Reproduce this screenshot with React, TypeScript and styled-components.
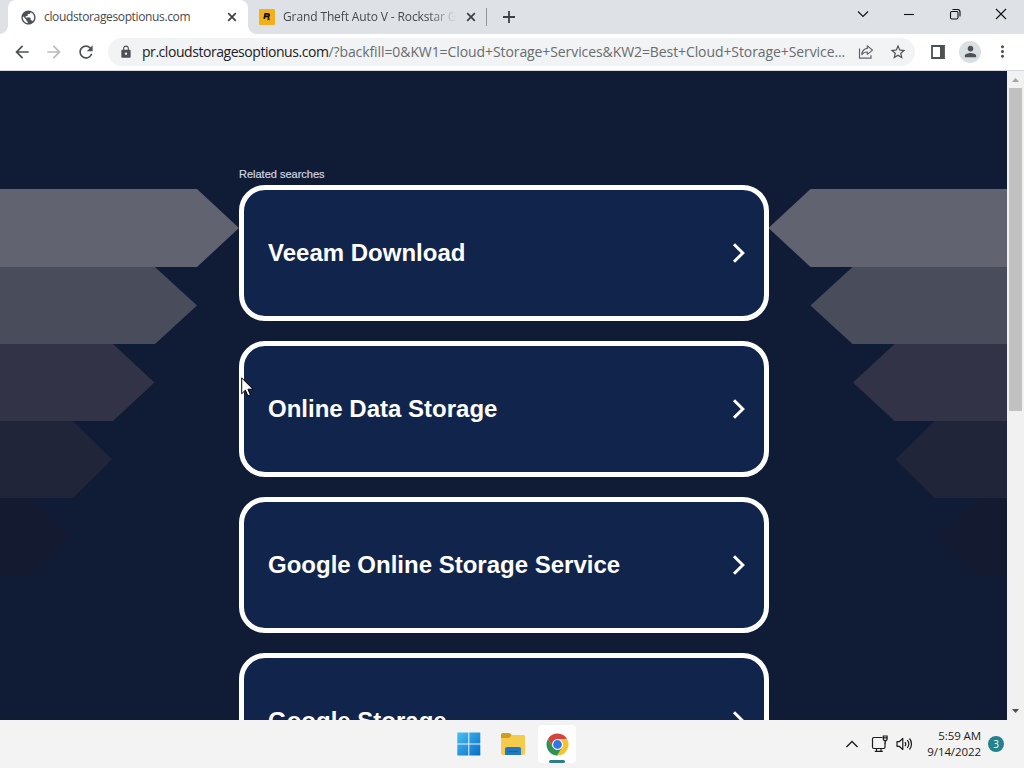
import React from "react";
import styled, { createGlobalStyle } from "styled-components";
import {
    MdArrowBack,
    MdArrowForward,
    MdLock,
    MdMoreVert,
    MdPerson,
    MdPublic,
    MdRefresh,
    MdStarBorder,
} from "react-icons/md";

const searches = [
    "Veeam Download",
    "Online Data Storage",
    "Google Online Storage Service",
    "Google Storage",
];

const arrows = [
    { top: 0, bottom: 78, neck: 197, tip: 239, fill: "#626371" },
    { top: 78, bottom: 155, neck: 155, tip: 197, fill: "#494c5b" },
    { top: 155, bottom: 232, neck: 113, tip: 154.5, fill: "#323347" },
    { top: 232, bottom: 309, neck: 73, tip: 112, fill: "#212539" },
    { top: 309, bottom: 386, neck: 29, tip: 69, fill: "#141a30" },
];

const CloseIcon = () => (
    <svg width="10" height="10" viewBox="0 0 10 10">
        <path d="M1.2 1.2l7.6 7.6M8.8 1.2L1.2 8.8" stroke="#3c4043" strokeWidth="1.7" />
    </svg>
);

const RockstarIcon = () => (
    <svg width="16" height="16" viewBox="0 0 16 16">
        <rect width="16" height="16" rx="1" fill="#f2b01c" />
        <path
            d="M5.2 9.800l1-5h2.600c2 0 1.900 2.200.3 2.600.7.4.3 1 .4 1.600M6.200 7.400h2.400"
            fill="none"
            stroke="#15120a"
            strokeWidth="1.7"
        />
        <path d="M9 8.500l.8 1 1.500-.1-.9.9.4 1.100-1.300-.6-1.200.6.300-1.200z" fill="#15120a" />
    </svg>
);

const ShareIcon = () => (
    <svg width="16" height="16" viewBox="0 0 16 16">
        <path
            d="M1.500 4.500v9.700h11.500v-3M9.300 1.800l5.200 4.300-5.200 4.300V8c-2.600 0-4.200.8-5.500 2.600.3-3.400 2.200-5.800 5.500-6.200z"
            fill="none"
            stroke="#5f6368"
            strokeWidth="1.2"
            strokeLinejoin="round"
        />
    </svg>
);

const ChromeIcon = () => (
    <svg width="23" height="23" viewBox="0 0 48 48">
        <circle cx="24" cy="24" r="23" fill="#fff" />
        <path d="M24 13h20.200A23 23 0 0 0 4.100 12.500l10.300 17A11 11 0 0 1 24 13z" fill="#d5453b" />
        <path d="M33.500 29.500L23.400 47A23 23 0 0 0 44.200 13H24a11 11 0 0 1 9.500 16.500z" fill="#f3c332" />
        <path d="M14.500 29.500L4.100 12.500A23 23 0 0 0 23.400 47l10.100-17.500a11 11 0 0 1-19 0z" fill="#2f9152" />
        <circle cx="24" cy="24" r="11" fill="#fff" />
        <circle cx="24" cy="24" r="9.200" fill="#2f78e4" />
    </svg>
);

const FolderIcon = () => (
    <svg width="24" height="22" viewBox="0 0 24 22">
        <path d="M0 2a2 2 0 0 1 2-2h6.500L11 2.500V6H0z" fill="#cf9c1b" />
        <path d="M0 5h8l3-3h11.500A1.500 1.500 0 0 1 24 3.500V20a2 2 0 0 1-2 2H2a2 2 0 0 1-2-2z" fill="#f5cb4d" />
        <path d="M4 22v-6a2 2 0 0 1 2-2h12a2 2 0 0 1 2 2v6z" fill="#1f78c2" />
        <path d="M7 18.500h10" stroke="#17629f" strokeWidth="1.200" />
    </svg>
);

const WindowsIcon = () => (
    <svg width="24" height="24" viewBox="0 0 24 24">
        <defs>
            <linearGradient id="win" x1="0" y1="0" x2="24" y2="24" gradientUnits="userSpaceOnUse">
                <stop offset="0" stopColor="#46c4f3" />
                <stop offset="1" stopColor="#0569c7" />
            </linearGradient>
        </defs>
        <path d="M.3.500h11v11H.3zM12.300.500h11v11h-11zM.3 12.500h11v11H.3zM12.300 12.500h11v11h-11z" fill="url(#win)" />
    </svg>
);

const NetworkIcon = () => (
    <svg width="18" height="18" viewBox="0 0 18 18" fill="none" stroke="#1b1b1b" strokeWidth="1.200">
        <path d="M11.500 2.500H3a1.500 1.500 0 0 0-1.500 1.500v8A1.500 1.500 0 0 0 3 13.500h9.500a1.500 1.500 0 0 0 1.500-1.500V7.500M5.500 13.500V16M10 13.500V16M3.800 16.400h8" />
        <path d="M12.300 1h3.800v3.200l-.9 1.400h-2l-.9-1.400zM12.300 2.800h3.800M14.200 5.600v3" />
    </svg>
);

const VolumeIcon = () => (
    <svg width="18" height="16" viewBox="0 0 18 16" fill="none" stroke="#1b1b1b" strokeWidth="1.200">
        <path d="M1 5.700h2.200L6.800 2.500v11L3.200 10.300H1z" strokeLinejoin="round" />
        <path d="M9 6a3.200 3.200 0 0 1 0 4M11.300 4.200a6 6 0 0 1 0 7.600M13.500 2.500a8.600 8.600 0 0 1 0 11" />
    </svg>
);

const Arrows = ({ width, mirrored = false }) => (
    <ArrowArt width={width} height="386" viewBox={`0 0 ${width} 386`}>
        <g transform={mirrored ? "translate(238.500 0) scale(-1 1)" : undefined}>
            {arrows.map(({ top, bottom, neck, tip, fill }) => (
                <polygon
                    key={top}
                    fill={fill}
                    points={`-10,${top} ${neck},${top} ${tip},${(top + bottom) / 2} ${neck},${bottom} -10,${bottom}`}
                />
            ))}
        </g>
    </ArrowArt>
);

const App = () => (
    <Screen>
        <GlobalStyle />
        <TabStrip>
            <Tab active>
                <MdPublic size={17} color="#4d5156" />
                <TabTitle spacing={-0.36}>cloudstoragesoptionus.com</TabTitle>
                <CloseIcon />
            </Tab>
            <Tab>
                <RockstarIcon />
                <TabTitle faded spacing={-0.12}>
                    Grand Theft Auto V - Rockstar Ga
                </TabTitle>
                <CloseIcon />
            </Tab>
            <NewTab>
                <svg width="12" height="12" viewBox="0 0 12 12">
                    <path d="M6 0v12M0 6h12" stroke="#3c4043" strokeWidth="1.800" />
                </svg>
            </NewTab>
            <WindowButtons>
                <svg width="12" height="12" viewBox="0 0 12 12">
                    <path d="M1 3.500l5 5 5-5" />
                </svg>
                <svg width="12" height="12" viewBox="0 0 12 12">
                    <path d="M1 6.500h10" />
                </svg>
                <svg width="12" height="12" viewBox="0 0 12 12">
                    <rect x="1.500" y="3.500" width="7.500" height="7.500" rx="1.500" />
                    <path d="M3.500 1.500H8.500a2.500 2.500 0 0 1 2.500 2.500v4.500" />
                </svg>
                <svg width="12" height="12" viewBox="0 0 12 12">
                    <path d="M1 1l10 10M11 1L1 11" />
                </svg>
            </WindowButtons>
        </TabStrip>
        <Toolbar>
            <NavButtons>
                <MdArrowBack size={20} />
                <MdArrowForward size={20} color="#b9bbbe" />
                <MdRefresh size={20} />
            </NavButtons>
            <AddressBar>
                <MdLock size={14} />
                <Url>
                    <b>pr.cloudstoragesoptionus.com</b>
                    /?backfill=0&amp;KW1=Cloud+Storage+Services&amp;KW2=Best+Cloud+Storage+Service...
                </Url>
                <ShareIcon />
                <MdStarBorder size={18} />
            </AddressBar>
            <ToolbarActions>
                <svg width="14" height="14" viewBox="0 0 14 14">
                    <path d="M1 1h12v12H1z" fill="none" stroke="#4d5156" strokeWidth="1.800" />
                    <path d="M9 1h4v12H9z" fill="#4d5156" />
                </svg>
                <Avatar>
                    <MdPerson size={17} />
                </Avatar>
                <MdMoreVert size={19} />
            </ToolbarActions>
        </Toolbar>
        <Viewport>
            <Page>
                <Arrows width={239} />
                <Results>
                    <Caption>Related searches</Caption>
                    {searches.map(search => (
                        <Card key={search}>
                            {search}
                            <svg width="14" height="22" viewBox="0 0 14 22">
                                <path d="M2 2.200l8.800 8.800L2 19.800" fill="none" stroke="#fff" strokeWidth="3" />
                            </svg>
                        </Card>
                    ))}
                </Results>
                <Arrows width={238} mirrored />
            </Page>
            <Scrollbar>
                <svg width="7" height="4" viewBox="0 0 7 4">
                    <path d="M0 4l3.500-4L7 4z" fill="#a3a3a3" />
                </svg>
                <Thumb />
                <svg width="7" height="4" viewBox="0 0 7 4">
                    <path d="M0 0l3.500 4L7 0z" fill="#505050" />
                </svg>
            </Scrollbar>
            <Cursor width="13" height="20" viewBox="0 0 13 20">
                <path
                    d="M.7.900v15.800l3.700-3.500 2.500 5.700 2.500-1.100-2.500-5.600h5.100z"
                    fill="#fff"
                    stroke="#000"
                />
            </Cursor>
        </Viewport>
        <Taskbar>
            <Apps>
                <AppButton>
                    <WindowsIcon />
                </AppButton>
                <AppButton>
                    <FolderIcon />
                </AppButton>
                <AppButton active>
                    <ChromeIcon />
                </AppButton>
            </Apps>
            <Tray>
                <svg width="12" height="12" viewBox="0 0 12 12">
                    <path d="M.5 9L6 3.500 11.500 9" fill="none" stroke="#1b1b1b" strokeWidth="1.300" />
                </svg>
                <NetworkIcon />
                <VolumeIcon />
                <Clock>
                    <span>5:59 AM</span>
                    <span>9/14/2022</span>
                </Clock>
                <Badge>3</Badge>
            </Tray>
        </Taskbar>
    </Screen>
);

const GlobalStyle = createGlobalStyle`
    * {
        box-sizing: border-box;
    }

    body {
        margin: 0;
        overflow: hidden;
    }

    svg {
        display: block;
        flex-shrink: 0;
    }
`;

const Screen = styled.div`
    display: flex;
    flex-direction: column;
    width: 1024px;
    height: 768px;
    overflow: hidden;
    font-family: "Open Sans", "Noto Sans", sans-serif;
`;

const TabStrip = styled.div`
    display: flex;
    height: 34px;
    background-color: #dee1e6;
`;

const Tab = styled.div<{ active?: boolean }>`
    display: flex;
    align-items: center;
    width: ${props => (props.active ? "240px" : "238px")};
    margin-left: ${props => (props.active ? "8px" : "0")};
    padding: 0 ${props => (props.active ? "11px 0 12px" : "10px 0 11px")};
    border-radius: 8px 8px 0 0;
    background-color: ${props => (props.active ? "#fff" : "transparent")};
    position: relative;

    /* flared feet of the selected tab */
    &::before,
    &::after {
        content: ${props => (props.active ? '""' : "none")};
        position: absolute;
        bottom: 0;
        width: 8px;
        height: 8px;
    }

    &::before {
        left: -8px;
        background: radial-gradient(circle at 0 0, transparent 7.5px, #fff 8px);
    }

    &::after {
        right: -8px;
        background: radial-gradient(circle at 100% 0, transparent 7.5px, #fff 8px);
    }
`;

const TabTitle = styled.span<{ faded?: boolean; spacing: number }>`
    flex: 1;
    min-width: 0;
    margin: 0 10px 0 ${props => (props.faded ? "8px" : "7px")};
    overflow: hidden;
    white-space: nowrap;
    font-size: 12px;
    line-height: 18px;
    letter-spacing: ${props => props.spacing}px;
    color: #45494d;
    ${props =>
        props.faded &&
        "mask-image: linear-gradient(to right, #000 calc(100% - 28px), transparent);"}
`;

const NewTab = styled.div`
    display: flex;
    align-items: center;
    height: 18px;
    margin-top: 8px;
    padding-left: 16px;
    border-left: 1px solid #92959a;
`;

const WindowButtons = styled.div`
    display: flex;
    gap: 34px;
    margin: 8px 17px 0 auto;
    fill: none;
    stroke: #111;
    stroke-width: 1.1;
`;

const Toolbar = styled.div`
    display: flex;
    align-items: center;
    height: 37px;
    padding: 0 12px 1px 12px;
    border-bottom: 1px solid #d5d8dc;
    background-color: #fff;
    color: #4d5156;
`;

const NavButtons = styled.div`
    display: flex;
    align-items: center;
    gap: 12px;
    width: 96px;
`;

const AddressBar = styled.div`
    display: flex;
    align-items: center;
    width: 807px;
    height: 28px;
    padding: 0 8px 0 11px;
    border-radius: 14px;
    background-color: #f1f3f4;

    svg:last-child {
        margin-left: 15px;
    }
`;

const Url = styled.span`
    width: 717px;
    margin-left: 9px;
    overflow: hidden;
    white-space: nowrap;
    font-size: 14px;
    line-height: 20px;
    letter-spacing: -0.09px;
    color: #686c70;

    b {
        font-weight: 400;
        letter-spacing: -0.45px;
        color: #202124;
    }
`;

const ToolbarActions = styled.div`
    display: flex;
    align-items: center;
    margin-left: auto;
    gap: 12px;
`;

const Avatar = styled.div`
    display: flex;
    align-items: center;
    justify-content: center;
    width: 22px;
    height: 22px;
    margin-left: 2px;
    border-radius: 50%;
    background-color: #dadfe4;
`;

const Viewport = styled.div`
    position: relative;
    display: flex;
    height: 649px;
    overflow: hidden;
`;

const Page = styled.div`
    display: flex;
    width: 1007px;
    background-color: #101c35;
`;

const ArrowArt = styled.svg`
    margin-top: 118px;
`;

const Results = styled.div`
    display: flex;
    flex-direction: column;
    flex-shrink: 0;
    gap: 20px;
    width: 530px;
    padding-top: 96px;
    font-family: "Liberation Sans", Arial, sans-serif;
`;

const Caption = styled.span`
    height: 14px;
    margin-bottom: -16px;
    font-size: 11px;
    line-height: 14px;
    color: #d0d5e2;
    -webkit-text-stroke: 0.2px #d0d5e2;
`;

const Card = styled.div`
    display: flex;
    flex-shrink: 0;
    align-items: center;
    justify-content: space-between;
    height: 136px;
    padding: 0 18px 0 24px;
    border: 5px solid #fff;
    border-radius: 26px;
    background-color: #11244c;
    font-size: 24px;
    font-weight: 700;
    color: #fff;
`;

const Scrollbar = styled.div`
    display: flex;
    flex-direction: column;
    align-items: center;
    width: 17px;
    padding: 7px 0;
    background-color: #f1f1f1;

    svg:last-child {
        margin-top: auto;
    }
`;

const Thumb = styled.div`
    width: 13px;
    height: 323px;
    margin-top: 6px;
    background-color: #c1c1c1;
`;

const Cursor = styled.svg`
    position: absolute;
    left: 241px;
    top: 306px;
`;

const Taskbar = styled.div`
    display: flex;
    height: 48px;
    padding-left: 450px;
    background-color: #f3f3f3;
`;

const Apps = styled.div`
    display: flex;
    align-items: center;
    gap: 6px;
`;

const AppButton = styled.div<{ active?: boolean }>`
    display: flex;
    align-items: center;
    justify-content: center;
    position: relative;
    width: 38px;
    height: 38px;
    border-radius: 4px;
    background-color: ${props => (props.active ? "#fff" : "transparent")};

    &::after {
        content: ${props => (props.active ? '""' : "none")};
        position: absolute;
        bottom: 0;
        width: 16px;
        height: 3px;
        border-radius: 2px;
        background-color: #2c7f88;
    }
`;

const Tray = styled.div`
    display: flex;
    align-items: center;
    margin-left: auto;
    padding-right: 20px;

    svg + svg {
        margin-left: 13px;
    }

    svg + svg + svg {
        margin-left: 7px;
    }
`;

const Clock = styled.div`
    display: flex;
    flex-direction: column;
    align-items: flex-end;
    width: 67px;
    font-size: 11.5px;
    line-height: 16px;
    letter-spacing: -0.08px;
    color: #1b1b1b;
`;

const Badge = styled.div`
    display: flex;
    align-items: center;
    justify-content: center;
    width: 16px;
    height: 16px;
    margin-left: 7px;
    border-radius: 50%;
    background-color: #23828b;
    font-size: 10px;
    color: #fff;
`;

export default App;
